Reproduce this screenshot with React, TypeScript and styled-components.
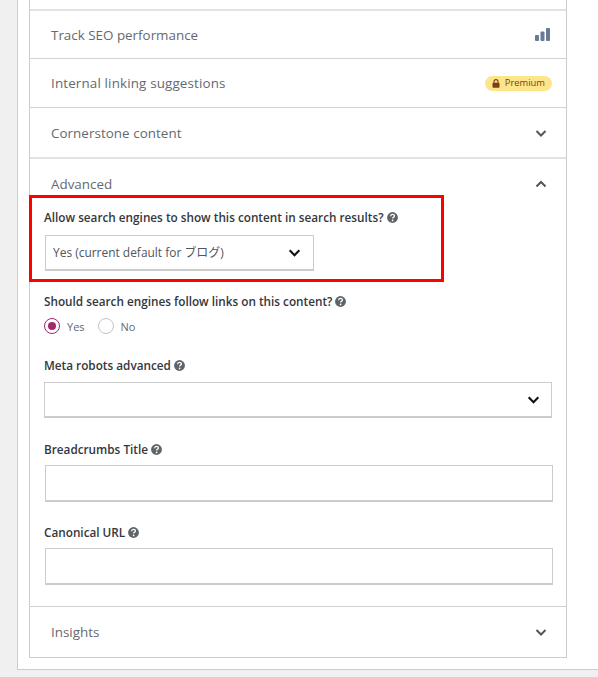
import React from "react";
import styled, { createGlobalStyle } from "styled-components";

const Global = createGlobalStyle`
  html, body { margin: 0; padding: 0; background: #f0f0f0; }
  body { width: 598px; height: 677px; overflow: hidden; font-family: "Open Sans", "Noto Sans CJK JP", sans-serif; }
`;

const Page = styled.div`
  width: 598px;
  height: 677px;
  padding-left: 17px;
  box-sizing: border-box;
  background: #f0f0f0;
  overflow: hidden;
`;

const Card = styled.div`
  width: 581px;
  height: 670px;
  box-sizing: border-box;
  background: #fff;
  border-left: 1px solid #ccc;
  border-bottom: 1px solid #ccc;
  padding-left: 11px;
`;

const Panel = styled.div`
  position: relative;
  width: 538px;
  height: 658px;
  box-sizing: border-box;
  border-left: 1px solid #ccc;
  border-right: 1px solid #ccc;
  border-bottom: 1px solid #ccc;
  padding-top: 9px;
`;

const Row = styled.div<{ $h: number; $thick?: boolean; $open?: boolean; $gap?: number }>`
  height: ${(p) => p.$h}px;
  margin-top: ${(p) => p.$gap ?? 0}px;
  box-sizing: border-box;
  border-top: ${(p) => (p.$thick ? "2px solid #e2e2e2" : "1px solid #d2d2d2")};
  display: flex;
  align-items: ${(p) => (p.$open ? "flex-start" : "center")};
  justify-content: space-between;
  padding: ${(p) => (p.$open ? "15px 18px 0 21px" : "0 18px 0 21px")};
  color: #646970;
  font-size: 13.4px;
  line-height: 20px;
`;

const RowTitle = styled.span<{ $track?: number }>`
  letter-spacing: ${(p) => p.$track ?? 0}px;
`;

const Badge = styled.span`
  display: flex;
  align-items: center;
  gap: 5px;
  height: 15px;
  padding: 0 7px 0 7px;
  margin-right: -4px;
  border-radius: 8px;
  background: #fde68a;
  color: #7a3f12;
  font-size: 9.4px;
`;

const BarsSlot = styled.span`
  display: flex;
  margin-right: -2px;
`;

const ChevronSlot = styled.span`
  display: flex;
  margin-top: 3px;
`;

const Advanced = styled.div`
  padding: 0 14px 0 14px;
`;

const FieldLabel = styled.div<{ $top: number }>`
  display: flex;
  align-items: center;
  gap: 3px;
  height: 16px;
  margin-top: ${(p) => p.$top}px;
  color: #32373c;
  font-size: 11.75px;
  font-weight: 600;
  white-space: nowrap;
`;

const SelectBox = styled.div<{ $w: number; $x?: number; $top: number; $h: number; $end?: number }>`
  width: ${(p) => p.$w}px;
  height: ${(p) => p.$h}px;
  margin-top: ${(p) => p.$top}px;
  margin-left: ${(p) => p.$x ?? 0}px;
  box-sizing: border-box;
  border: 1px solid #ccc;
  border-bottom-width: 2px;
  background: #fff;
  display: flex;
  align-items: center;
  justify-content: space-between;
  padding: 0 ${(p) => p.$end ?? 11}px 0 8px;
  color: #50565c;
  font-size: 11.95px;
`;

const SelectValue = styled.span`
  position: relative;
  top: -1px;
  margin-left: -1px;
`;

const Radios = styled.div`
  display: flex;
  align-items: center;
  margin-top: 8px;
  height: 18px;
  color: #646970;
  font-size: 11px;
`;

const Radio = styled.span<{ $on?: boolean }>`
  width: 16px;
  height: 16px;
  box-sizing: border-box;
  border-radius: 50%;
  border: 1px solid ${(p) => (p.$on ? "#a4286a" : "#c4c4c4")};
  display: flex;
  align-items: center;
  justify-content: center;
  margin-right: 7px;
  background: #fff;
  &::after {
    content: "";
    display: ${(p) => (p.$on ? "block" : "none")};
    width: 8px;
    height: 8px;
    border-radius: 50%;
    background: #a4286a;
  }
`;

const RadioText = styled.span`
  margin-right: 13px;
`;

const RedBox = styled.div`
  position: absolute;
  left: -1px;
  top: 195px;
  width: 415px;
  height: 87px;
  box-sizing: border-box;
  border: 3px solid #ff0000;
  pointer-events: none;
`;

const Chevron = ({ up, color = "#50565c", size = 14 }: { up?: boolean; color?: string; size?: number }) => (
  <svg width={size} height={size} viewBox="0 0 14 14" fill="none">
    <path d={up ? "M2.5 9.5 7 5l4.5 4.5" : "M2.5 5 7 9.5 11.5 5"} stroke={color} strokeWidth="2" />
  </svg>
);

const Help = () => (
  <svg width="11" height="11" viewBox="0 0 11 11">
    <circle cx="5.5" cy="5.5" r="5.4" fill="#5f6469" />
    <path d="M3.6 4.2c0-2.4 3.8-2.4 3.8-.2 0 1.3-1.8 1.2-1.8 2.5" fill="none" stroke="#fff" strokeWidth="1.3" />
    <circle cx="5.6" cy="8.4" r=".85" fill="#fff" />
  </svg>
);

const Bars = () => (
  <svg width="15" height="13" viewBox="0 0 15 13">
    <rect x="0" y="7" width="4" height="6" rx="1" fill="#677b95" />
    <rect x="5.5" y="3.5" width="4" height="9.5" rx="1" fill="#677b95" />
    <rect x="11" y="0" width="4" height="13" rx="1" fill="#677b95" />
  </svg>
);

const Lock = () => (
  <svg width="8" height="9" viewBox="0 0 8 9">
    <path d="M2 4V2.6a2 2 0 0 1 4 0V4" fill="none" stroke="#7a3f12" strokeWidth="1.1" />
    <rect x="0.5" y="3.8" width="7" height="5" rx=".8" fill="#7a3f12" />
  </svg>
);

export default function App() {
  return (
    <Page>
      <Global />
      <Card>
        <Panel>
          <Row $h={49} $thick>
            <RowTitle>Track SEO performance</RowTitle>
            <BarsSlot><Bars /></BarsSlot>
          </Row>
          <Row $h={49}>
            <RowTitle $track={0.15}>Internal linking suggestions</RowTitle>
            <Badge><Lock />Premium</Badge>
          </Row>
          <Row $h={50}>
            <RowTitle $track={0.05}>Cornerstone content</RowTitle>
            <Chevron />
          </Row>
          <Row $h={44} $thick $open>
            <RowTitle>Advanced</RowTitle>
            <ChevronSlot><Chevron up /></ChevronSlot>
          </Row>
          <Advanced>
            <FieldLabel $top={8}>Allow search engines to show this content in search results? <Help /></FieldLabel>
            <SelectBox $w={269} $x={1} $top={10} $h={36}>
              <SelectValue>Yes (current default for ブログ)</SelectValue>
              <Chevron color="#111" size={15} />
            </SelectBox>
            <FieldLabel $top={22}>Should search engines follow links on this content? <Help /></FieldLabel>
            <Radios>
              <Radio $on /><RadioText>Yes</RadioText>
              <Radio /><RadioText>No</RadioText>
            </Radios>
            <FieldLabel $top={22}>Meta robots advanced <Help /></FieldLabel>
            <SelectBox $w={508} $top={9} $h={36} $end={10}>
              <span />
              <Chevron color="#111" size={15} />
            </SelectBox>
            <FieldLabel $top={23}>Breadcrumbs Title <Help /></FieldLabel>
            <SelectBox $w={508} $x={1} $top={8} $h={37} />
            <FieldLabel $top={22}>Canonical URL <Help /></FieldLabel>
            <SelectBox $w={508} $x={1} $top={8} $h={37} />
          </Advanced>
          <Row $h={51} $gap={21}>
            <RowTitle>Insights</RowTitle>
            <Chevron />
          </Row>
          <RedBox />
        </Panel>
      </Card>
    </Page>
  );
}
